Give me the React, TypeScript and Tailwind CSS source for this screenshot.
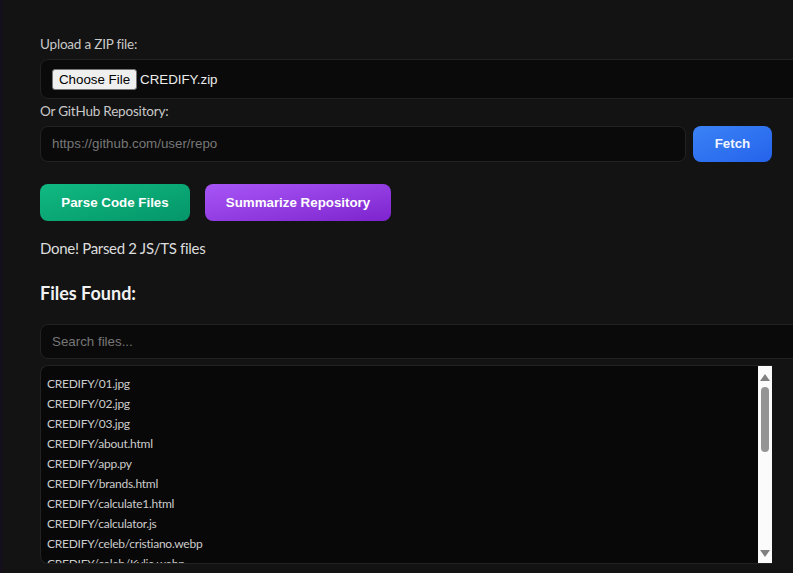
const files = [
  'CREDIFY/01.jpg',
  'CREDIFY/02.jpg',
  'CREDIFY/03.jpg',
  'CREDIFY/about.html',
  'CREDIFY/app.py',
  'CREDIFY/brands.html',
  'CREDIFY/calculate1.html',
  'CREDIFY/calculator.js',
  'CREDIFY/celeb/cristiano.webp',
  'CREDIFY/celeb/Kylie.webp',
];

const uiFont = "font-['Lato',sans-serif]";
const inputFont = "font-['Liberation_Sans',Arial,sans-serif]";

const App = () => {
  return (
    <div className={`flex h-[573px] w-[793px] overflow-hidden bg-[#131313] ${uiFont}`}>
      <div className="w-[3px] shrink-0 bg-[#150f1c]" />
      <main className="w-[790px] shrink-0 pl-[37px] pt-[34px]">
        <label className="block h-[25px] text-[13.5px] leading-[20px] tracking-[-0.2px] text-[#c9c9c9]">Upload a ZIP file:</label>
        <div className={`flex h-[40px] w-[800px] items-center rounded-[8px] border border-[#222222] bg-[#0a0a0a] pl-[11px] ${inputFont}`}>
          <button className="mt-[1px] h-[21px] w-[85px] rounded-[3px] border border-[#767676] bg-[#efefef] text-[13.33px] leading-none text-black">
            Choose File
          </button>
          <span className="ml-[3px] mt-[1px] text-[13.33px] text-[#ececec]">CREDIFY.zip</span>
        </div>

        <label className="mt-[2px] block h-[25px] text-[13.5px] leading-[20px] tracking-[-0.2px] text-[#c9c9c9]">Or GitHub Repository:</label>
        <div className="flex items-stretch gap-[7px]">
          <div className={`flex h-[36px] w-[646px] items-center rounded-[8px] border border-[#222222] bg-[#0a0a0a] pl-[11px] text-[13.33px] text-[#777777] ${inputFont}`}>
            https://github.com/user/repo
          </div>
          <button className={`h-[36px] w-[79px] rounded-[8px] bg-gradient-to-br from-[#3b82f6] to-[#2563eb] text-[13.33px] font-bold text-[#f1f5ff] ${inputFont}`}>
            Fetch
          </button>
        </div>

        <div className={`mt-[22px] flex gap-[15px] text-[13.33px] font-bold text-white ${inputFont}`}>
          <button className="h-[37px] w-[150px] rounded-[8px] bg-gradient-to-br from-[#10b981] to-[#059669]">
            Parse Code Files
          </button>
          <button className="h-[37px] w-[186px] rounded-[8px] bg-gradient-to-br from-[#a855f7] to-[#7e22ce]">
            Summarize Repository
          </button>
        </div>

        <p className="mt-[16px] h-[22px] text-[15px] leading-[22px] tracking-[-0.3px] text-[#dddddd]">Done! Parsed 2 JS/TS files</p>
        <h2 className="mt-[22px] h-[24px] text-[18px] font-bold leading-[24px] text-[#f2f2f2]">Files Found:</h2>

        <div className={`mt-[19px] flex h-[35px] w-[800px] items-center rounded-[8px] border border-[#222222] bg-[#0a0a0a] pl-[11px] text-[13.33px] text-[#777777] ${inputFont}`}>
          Search files...
        </div>

        <div className="mt-[6px] flex h-[199px] w-[732px] overflow-hidden rounded-l-[8px] border-y border-l border-[#222222] bg-[#080808]">
          <ul className="min-w-0 flex-1 overflow-hidden pl-[6px] pt-[8px] text-[12px] leading-[20px] tracking-[-0.25px] text-[#cccccc]">
            {files.map((file) => (
              <li key={file} className="h-[20px] whitespace-nowrap">
                {file}
              </li>
            ))}
          </ul>
          <div className="flex w-[14px] shrink-0 flex-col items-center bg-[#fbfbfb] pt-[8px] pb-[6px]">
            <svg width="10" height="7" viewBox="0 0 10 7" className="shrink-0">
              <path d="M5 0 L10 7 H0 Z" fill="#808080" />
            </svg>
            <div className="mt-[6px] h-[65px] w-[8px] rounded-[4px] bg-[#949494]" />
            <div className="flex-1" />
            <svg width="10" height="7" viewBox="0 0 10 7" className="shrink-0">
              <path d="M0 0 H10 L5 7 Z" fill="#808080" />
            </svg>
          </div>
        </div>
      </main>
    </div>
  );
};

export default App;
